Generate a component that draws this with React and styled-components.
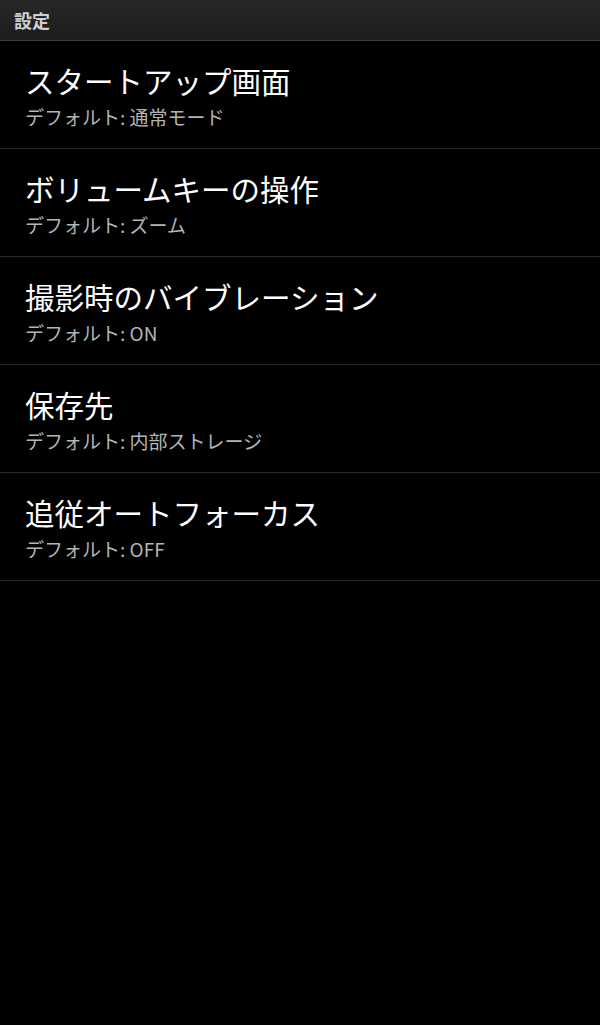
import React from 'react'
import styled, { createGlobalStyle } from 'styled-components'

const GlobalStyle = createGlobalStyle`
    html, body {
        margin: 0;
        padding: 0;
        background-color: #000;
    }

    body {
        font-family: "Noto Sans CJK JP", "Noto Sans", sans-serif;
    }
`

const Screen = styled.div`
    width: 600px;
    height: 1025px;
    display: flex;
    flex-direction: column;
    background-color: #000;
    overflow: hidden;
`

const Header = styled.header`
    height: 40px;
    display: flex;
    align-items: center;
    padding: 0 14px;
    background: linear-gradient(#272727, #1d1d1d);
    border-bottom: 1px solid #3c3c3c;

    h1{
        margin: 0;
        font-size: 18px;
        font-weight: 700;
        color: #cfcfcf;
    }
`

const SettingList = styled.ul`
    list-style: none;
    margin: 0;
    padding: 0;
`

const SettingItem = styled.li`
    display: flex;
    flex-direction: column;
    padding: 19px 25px 0;
    border-bottom: 1px solid #2a2a2a;
    box-sizing: border-box;
    height: 108px;
`

const Title = styled.span`
    font-size: 29.5px;
    line-height: 40px;
    color: #fff;
    white-space: nowrap;
`

const Summary = styled.span`
    margin-top: 4px;
    font-size: 19px;
    line-height: 26px;
    color: #b4b4b4;
    white-space: nowrap;
`

const settings = [
    { title: 'スタートアップ画面', value: '通常モード' },
    { title: 'ボリュームキーの操作', value: 'ズーム' },
    { title: '撮影時のバイブレーション', value: 'ON' },
    { title: '保存先', value: '内部ストレージ' },
    { title: '追従オートフォーカス', value: 'OFF' },
]

const App = () => {
  return (
    <Screen>
        <GlobalStyle />
        <Header>
            <h1>設定</h1>
        </Header>

        <SettingList>
            {
            settings.map(
                (setting, index) => <SettingItem key={index}>
                    <Title>{setting.title}</Title>
                    <Summary>デフォルト: {setting.value}</Summary>
                </SettingItem>
            )
            }
        </SettingList>
    </Screen>
  )
}

export default App
